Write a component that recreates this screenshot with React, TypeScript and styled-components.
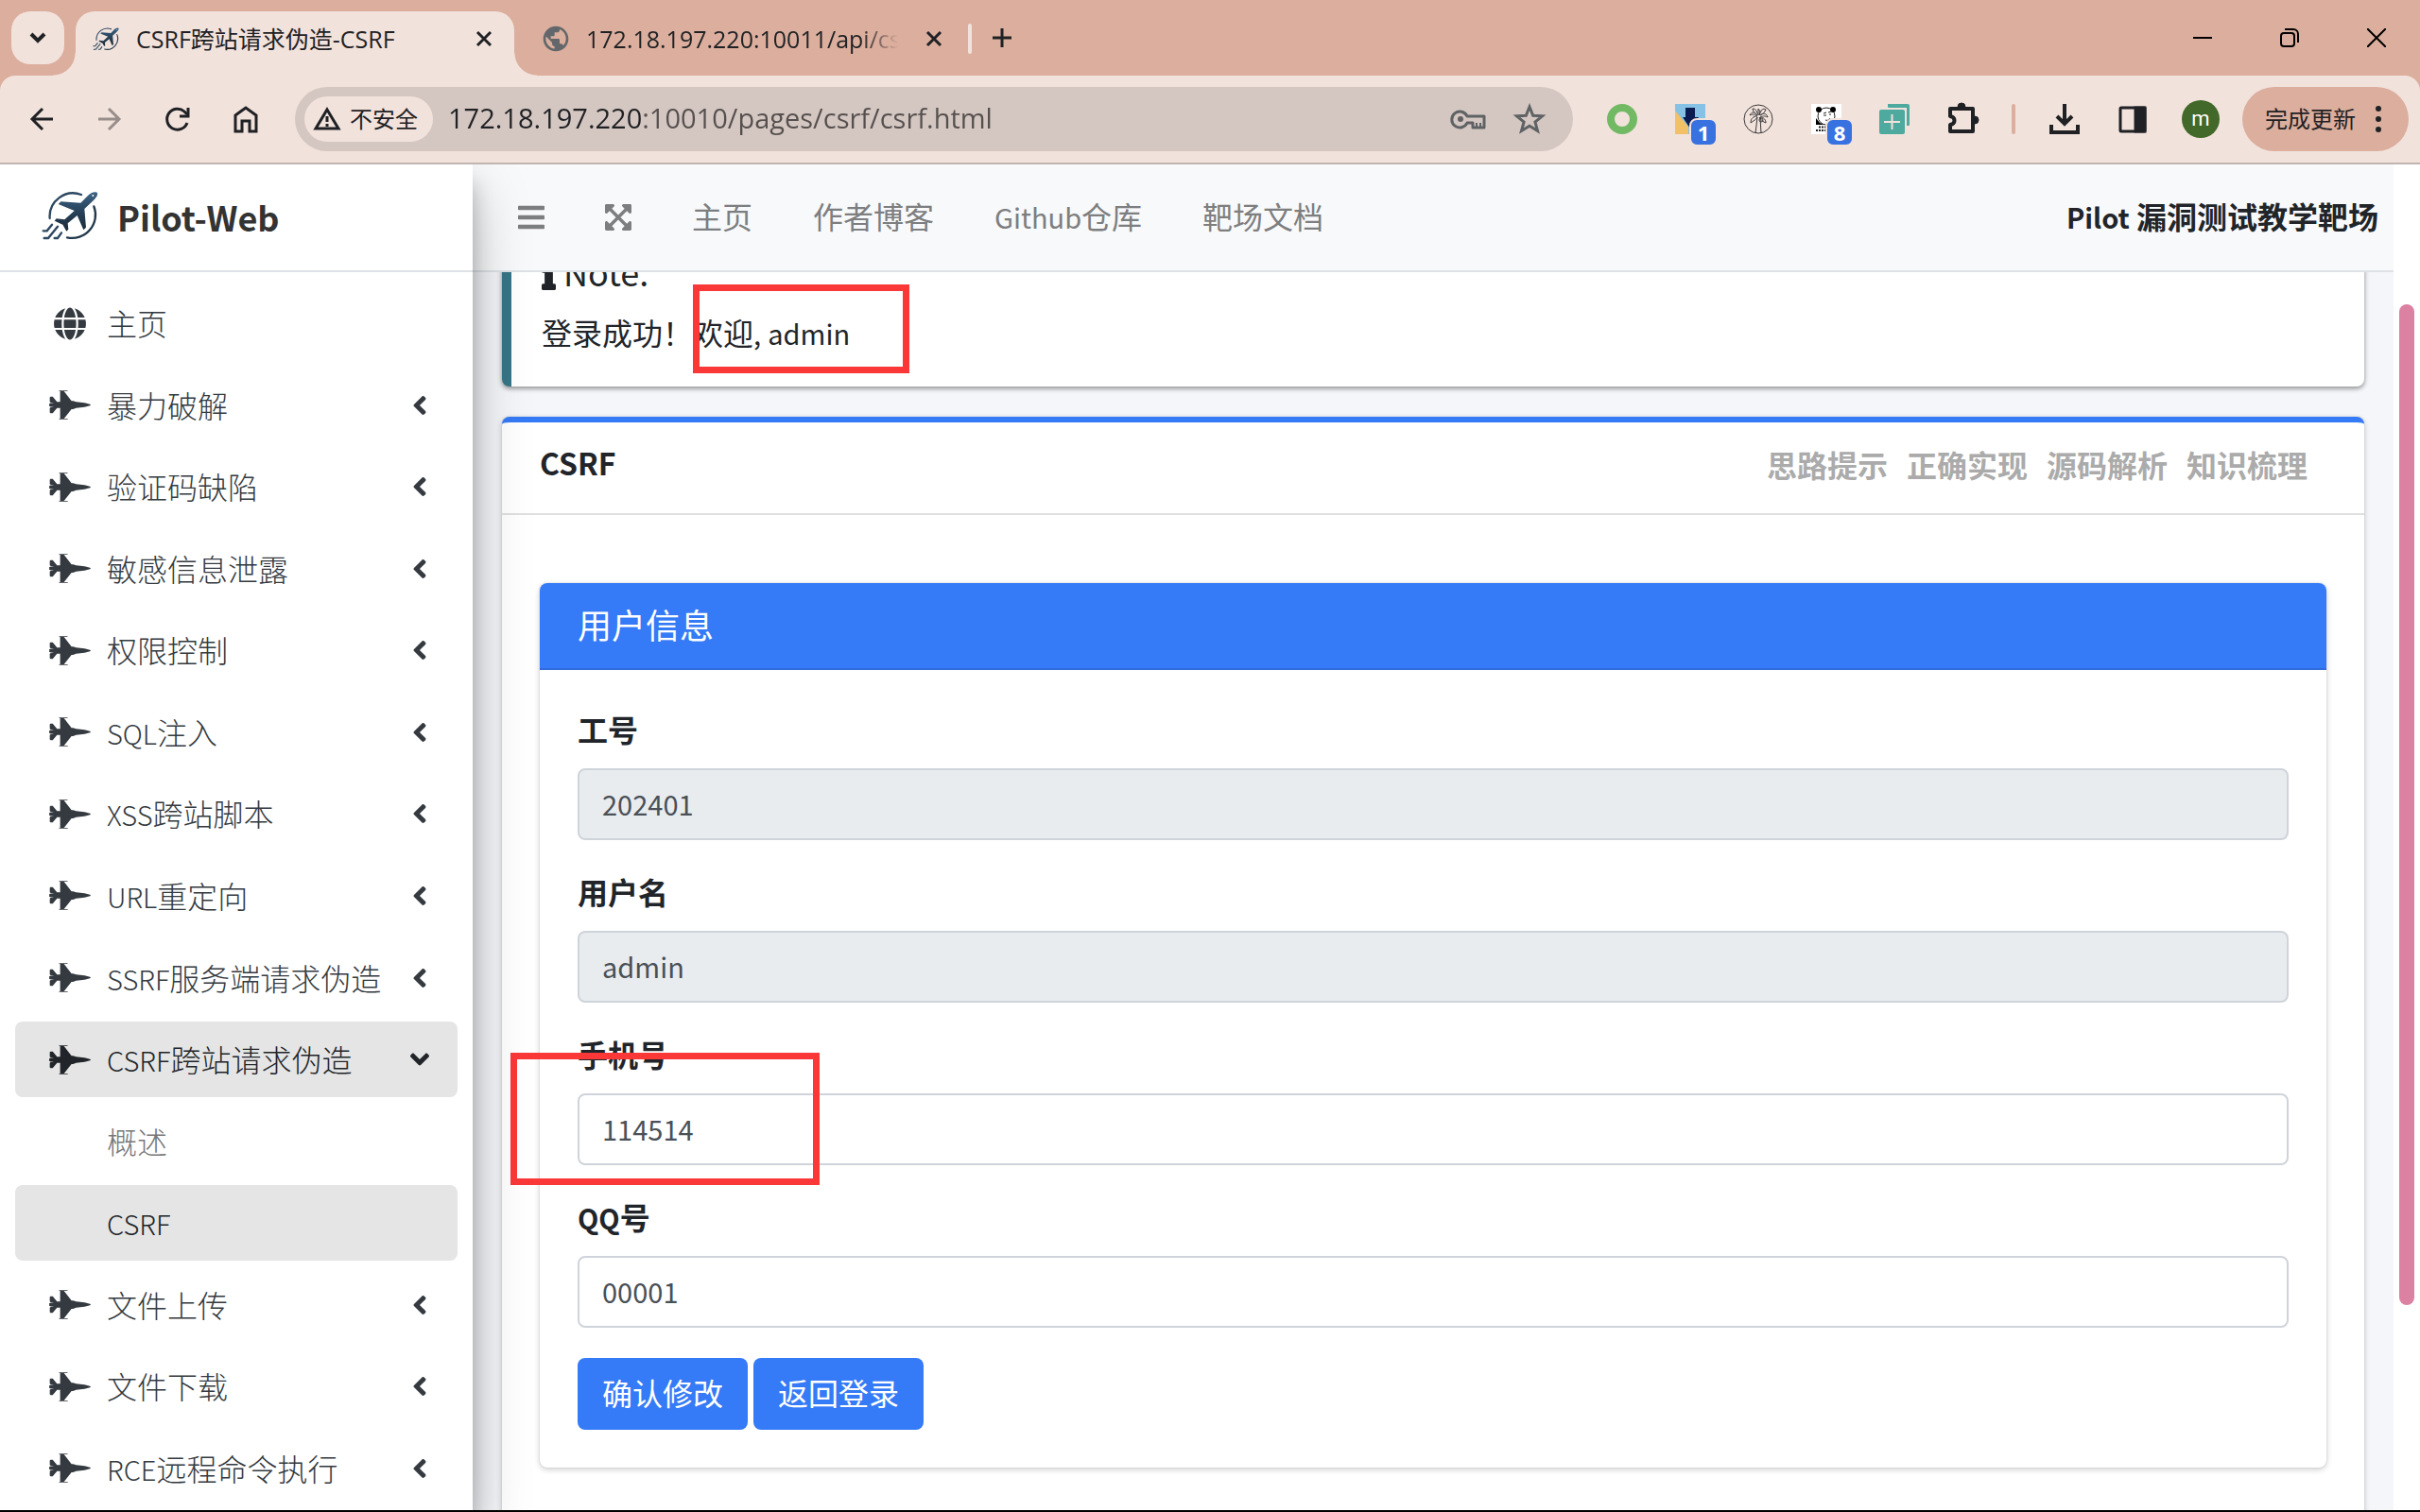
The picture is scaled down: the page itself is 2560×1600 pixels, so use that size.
import React from "react";
import styled, { createGlobalStyle, css } from "styled-components";
import {
  FaAngleDown,
  FaAngleLeft,
  FaBars,
  FaExpandArrowsAlt,
  FaFighterJet,
  FaGlobe,
  FaInfo,
} from "react-icons/fa";
import { MdPublic } from "react-icons/md";

const color = {
  frame: "#dbae9d",
  toolbar: "#f2e2dc",
  omnibox: "#d4c6c1",
  ink: "#1f2124",
  text: "#212529",
  sidebarText: "#343a40",
  muted: "#7d7e7f",
  primary: "#357af6",
  line: "#dee2e6",
  annotation: "#fb3838",
};

const GlobalStyle = createGlobalStyle`
  *, *::before, *::after { box-sizing: border-box; }
  body {
    margin: 0;
    font-family: "Noto Sans CJK SC", sans-serif;
    font-size: 32px;
    line-height: 48px;
    color: ${color.text};
  }
  button, input { font: inherit; color: inherit; margin: 0; }
  button { border: 0; padding: 0; background: none; cursor: pointer; }
  a { color: inherit; text-decoration: none; }
  svg { display: block; flex: none; }
`;

const Window = styled.div`
  display: flex;
  flex-direction: column;
  height: 100vh;
  overflow: hidden;
  background: #fff;
  border-bottom: 2px solid #000;
`;

/* ---------- browser frame ---------- */

const chromeFont = css`
  font-family: "Open Sans", "Noto Sans CJK SC", sans-serif;
  color: ${color.ink};
`;

const TabStrip = styled.div`
  ${chromeFont}
  display: flex;
  flex: none;
  height: 80px;
  padding: 12px 0 0 12px;
  background: ${color.frame};
  font-size: 24px;
  line-height: 32px;
`;

const TabSearch = styled.button`
  display: grid;
  place-items: center;
  width: 56px;
  height: 56px;
  margin-right: 12px;
  border-radius: 20px;
  background: ${color.toolbar};
`;

const Tab = styled.div<{ $active?: boolean }>`
  position: relative;
  display: flex;
  align-items: center;
  height: 68px;
  padding-bottom: 12px;
  padding-top: 2px;
  ${(p) =>
    p.$active
      ? css`
          width: 464px;
          padding-left: 18px;
          padding-right: 20px;
          gap: 18px;
          border-radius: 20px 20px 0 0;
          background: ${color.toolbar};
          &::before,
          &::after {
            content: "";
            position: absolute;
            bottom: 0;
            width: 24px;
            height: 24px;
          }
          &::before {
            right: 100%;
            background: radial-gradient(circle at 0 0, transparent 23px, ${color.toolbar} 24px);
          }
          &::after {
            left: 100%;
            background: radial-gradient(circle at 100% 0, transparent 23px, ${color.toolbar} 24px);
          }
        `
      : css`
          width: 480px;
          padding-left: 28px;
          padding-right: 24px;
          gap: 16px;
          &::after {
            content: "";
            position: absolute;
            right: -4px;
            top: 13px;
            width: 4px;
            height: 32px;
            border-radius: 2px;
            background: ${color.toolbar};
          }
        `}
`;

const TabTitle = styled.span<{ $fade?: boolean }>`
  flex: 1;
  overflow: hidden;
  white-space: nowrap;
  font-size: 25px;
  ${(p) =>
    p.$fade &&
    css`
      margin-right: 10px;
      -webkit-mask-image: linear-gradient(to right, #000 calc(100% - 40px), transparent);
      mask-image: linear-gradient(to right, #000 calc(100% - 40px), transparent);
    `}
`;

const GlyphButton = styled.button`
  display: grid;
  place-items: center;
  width: 24px;
  height: 32px;
`;

const NewTab = styled.button`
  display: grid;
  place-items: center;
  width: 72px;
  height: 56px;
`;

const WindowControls = styled.div`
  display: flex;
  margin-left: auto;
  margin-top: -12px;
`;

const WindowButton = styled.button`
  display: grid;
  place-items: center;
  width: 92px;
  height: 80px;
`;

const ToolbarBack = styled.div`
  flex: none;
  background: ${color.frame};
`;

const Toolbar = styled.div`
  ${chromeFont}
  display: flex;
  align-items: center;
  height: 94px;
  padding: 0 12px 0 8px;
  border-radius: 16px 16px 0 0;
  border-bottom: 2px solid #c0b5b1;
  background: ${color.toolbar};
`;

const ToolButton = styled.button`
  position: relative;
  display: grid;
  place-items: center;
  width: 72px;
  height: 68px;
`;

const Omnibox = styled.div`
  display: flex;
  align-items: center;
  flex: 1;
  height: 68px;
  margin: 0 16px;
  padding: 0 24px 0 10px;
  border-radius: 34px;
  background: ${color.omnibox};
`;

const SecurityChip = styled.button`
  display: flex;
  align-items: center;
  gap: 8px;
  height: 48px;
  padding: 0 16px 0 8px;
  border-radius: 24px;
  background: ${color.toolbar};
  font-size: 24px;
  line-height: 32px;
`;

const Address = styled.input`
  flex: 1;
  min-width: 0;
  height: 48px;
  margin-left: 16px;
  padding: 0 0 2px;
  border: 0;
  outline: 0;
  font-size: 29px;
  line-height: 48px;
  background: linear-gradient(to right, ${color.ink} 207px, #55504e 207px);
  -webkit-background-clip: text;
  background-clip: text;
  -webkit-text-fill-color: transparent;
`;

const OmniActions = styled.div`
  display: flex;
  align-items: center;
  gap: 20px;
`;

const OmniButton = styled.button`
  display: grid;
  place-items: center;
  width: 44px;
  height: 48px;
`;

const Badge = styled.span`
  position: absolute;
  left: 35px;
  top: 33px;
  width: 30px;
  height: 30px;
  border: 2px solid ${color.toolbar};
  border-radius: 8px;
  background: #3871e0;
  color: #fff;
  font: 700 22px/26px "Open Sans", sans-serif;
  text-align: center;
`;

const ToolDivider = styled.span`
  width: 4px;
  height: 32px;
  margin: 0 16px;
  border-radius: 2px;
  background: ${color.frame};
`;

const Avatar = styled.span`
  display: grid;
  place-items: center;
  width: 40px;
  height: 40px;
  border-radius: 50%;
  background: #42682a;
  color: #fff;
  font: 400 22px/32px Roboto, sans-serif;
`;

const UpdatePill = styled.button`
  display: flex;
  align-items: center;
  justify-content: space-between;
  width: 176px;
  height: 68px;
  margin-left: 8px;
  padding: 0 28px 0 24px;
  border-radius: 34px;
  background: ${color.frame};
  font-size: 24px;
  line-height: 32px;
`;

/* ---------- page ---------- */

const Page = styled.div`
  display: flex;
  flex: 1;
  min-height: 0;
  overflow: hidden;
`;

const Sidebar = styled.aside`
  position: relative;
  z-index: 2;
  display: flex;
  flex-direction: column;
  flex: none;
  width: 500px;
  background: #fff;
  box-shadow: 0 28px 56px rgba(0, 0, 0, 0.25), 0 20px 20px rgba(0, 0, 0, 0.22);
`;

const Brand = styled.a`
  display: flex;
  align-items: center;
  flex: none;
  gap: 20px;
  height: 114px;
  padding: 0 44px 2px;
  border-bottom: 2px solid ${color.line};
  color: #333;
  font-size: 36px;
  font-weight: 700;
`;

const Menu = styled.ul`
  display: flex;
  flex-direction: column;
  flex: 1;
  justify-content: space-between;
  margin: 0;
  padding: 14px 16px 4px;
  list-style: none;
`;

const MenuLink = styled.a<{ $active?: boolean; $sub?: boolean }>`
  display: flex;
  align-items: center;
  height: 80px;
  padding: 0 24px 0 34px;
  border-radius: 8px;
  background: ${(p) => (p.$active ? "#e5e5e5" : "transparent")};
  color: ${(p) => (p.$active ? color.text : p.$sub ? "#777" : color.sidebarText)};
  font-weight: 300;
`;

const MenuIcon = styled.span`
  display: grid;
  place-items: center;
  width: 48px;
  margin-right: 15px;
  svg {
    width: 44px;
    height: 35px;
  }
`;

const MenuText = styled.span`
  flex: 1;
  padding-bottom: 2px;
  white-space: nowrap;
`;

const LatinRun = styled.span`
  font-size: 29px;
  line-height: 1;
`;

const Main = styled.div`
  display: flex;
  flex-direction: column;
  flex: 1;
  min-width: 0;
  background: #f4f6f9;
`;

const Navbar = styled.nav`
  position: relative;
  z-index: 1;
  display: flex;
  align-items: center;
  flex: none;
  gap: 64px;
  height: 114px;
  padding: 0 16px 0 48px;
  border-bottom: 2px solid ${color.line};
  background: #f8f9fa;
  color: ${color.muted};
  white-space: nowrap;
`;

const NavIcon = styled.button`
  svg {
    width: 28px;
    height: 32px;
  }
`;

const NavLink = styled.a`
  padding-bottom: 4px;
`;

const SiteTitle = styled.strong`
  margin-left: auto;
  padding-bottom: 4px;
  color: ${color.text};
  font-weight: 700;
`;

const Viewport = styled.main`
  flex: 1;
  min-height: 0;
  overflow: hidden;
`;

/* The page is shown scrolled down a little, under the navbar. */
const Content = styled.div`
  display: flex;
  flex-direction: column;
  gap: 32px;
  margin-top: -55px;
  padding: 0 31px;
`;

const cardShadow = "0 0 2px rgba(0, 0, 0, 0.13), 0 2px 6px rgba(0, 0, 0, 0.2)";

const Callout = styled.section`
  position: relative;
  padding: 30px 32px 34px;
  border-left: 10px solid #367687;
  border-radius: 8px;
  background: #fff;
  box-shadow: 0 2px 6px rgba(0, 0, 0, 0.2), 0 2px 4px rgba(0, 0, 0, 0.28);
`;

const CalloutTitle = styled.h5`
  display: flex;
  align-items: center;
  gap: 8px;
  margin: 0 0 16px;
  font-size: 36px;
  font-weight: 400;
  line-height: 48px;
  svg {
    width: 15px;
    height: 40px;
  }
`;

const Plain = styled.p`
  margin: 0;
`;

const Highlight = styled.div<{ $left: number; $top: number; $width: number; $height: number }>`
  position: absolute;
  left: ${(p) => p.$left}px;
  top: ${(p) => p.$top}px;
  width: ${(p) => p.$width}px;
  height: ${(p) => p.$height}px;
  border: 7px solid ${color.annotation};
  pointer-events: none;
`;

const Card = styled.section`
  border-top: 6px solid ${color.primary};
  border-radius: 8px;
  background: #fff;
  box-shadow: ${cardShadow};
`;

const CardHeader = styled.header`
  display: flex;
  align-items: flex-start;
  justify-content: space-between;
  height: 98px;
  padding: 22px 60px 0 40px;
  border-bottom: 2px solid #dfdfdf;
`;

const CardTitle = styled.h3`
  margin: 0;
  font-size: 32px;
  font-weight: 700;
  line-height: 40px;
`;

const HintLinks = styled.div`
  display: flex;
  gap: 20px;
  color: #ababab;
  font-weight: 700;
  line-height: 44px;
`;

const CardBody = styled.div`
  padding: 72px 40px;
`;

const Panel = styled.form`
  border-radius: 8px;
  background: #fff;
  box-shadow: ${cardShadow};
`;

const PanelTitle = styled.h3`
  margin: 0;
  padding: 19px 40px 23px;
  border-bottom: 2px solid #2f6ddd;
  border-radius: 8px 8px 0 0;
  background: ${color.primary};
  color: #fff;
  font-size: 36px;
  font-weight: 400;
  line-height: 48px;
`;

const PanelBody = styled.div`
  padding: 40px;
`;

const Field = styled.div`
  position: relative;
  display: flex;
  flex-direction: column;
  gap: 20px;
  margin-bottom: 32px;
`;

const FieldLabel = styled.label`
  font-weight: 700;
  line-height: 44px;
`;

const TextInput = styled.input`
  width: 100%;
  height: 76px;
  padding: 0 24px 2px;
  border: 2px solid #ced4da;
  border-radius: 8px;
  background: #fff;
  color: #495057;
  font-size: 29px;
  &:disabled {
    background: #e9ecef;
    -webkit-text-fill-color: #495057;
    opacity: 1;
  }
`;

const ButtonRow = styled.div`
  display: flex;
  gap: 6px;
`;

const PrimaryButton = styled.button`
  height: 76px;
  padding: 0 26px 4px;
  border-radius: 8px;
  background: ${color.primary};
  color: #fff;
`;

const ScrollTrack = styled.div`
  display: grid;
  flex: none;
  grid-template-rows: 148fr 1059fr 217fr;
  width: 28px;
  padding: 0 6px;
  background: #fff;
`;

const ScrollThumb = styled.div`
  grid-row: 2;
  border-radius: 8px;
  background: #db81a1;
`;

/* ---------- drawings ---------- */

const PilotLogo = ({ width }: { width: number }) => (
  <svg width={width} height={(width * 160) / 180} viewBox="25 35 180 160" aria-hidden="true">
    <defs>
      <linearGradient id="pilot" x1="0" y1="0" x2="0" y2="1">
        <stop offset="0" stopColor="#3d6485" />
        <stop offset="0.55" stopColor="#263f56" />
        <stop offset="1" stopColor="#1c2b38" />
      </linearGradient>
    </defs>
    <g fill="none" stroke="#2c4760" strokeWidth="7" strokeLinecap="round">
      <path d="M51 122A74 74 0 0 1 151 47" />
      <path d="M191 84A74 74 0 0 1 106 183" stroke="#22384c" />
      <path d="M58 142L42 162H30" />
      <path d="M76 148L46 185H33" />
      <path d="M88 168L76 185H66" />
    </g>
    <path
      fill="url(#pilot)"
      d="M201 40C192 36 181 41 172 50L149 73L86 69L78 77L129 98L98 126L72 123L66 130L92 142L104 163L110 157L108 138L138 113L158 159L166 151L161 92L189 66C200 55 205 46 201 40Z"
    />
    <circle cx="188" cy="50" r="3" fill="#fff" />
  </svg>
);

const Stroke = ({
  size = 32,
  width = 4,
  stroke = color.ink,
  children,
}: {
  size?: number;
  width?: number;
  stroke?: string;
  children: React.ReactNode;
}) => (
  <svg width={size} height={size} viewBox={`0 0 ${size} ${size}`} fill="none" stroke={stroke} strokeWidth={width} aria-hidden="true">
    {children}
  </svg>
);

const CloseGlyph = () => (
  <Stroke size={20} width={3}>
    <path d="M3 3L17 17M17 3L3 17" />
  </Stroke>
);

const PalmIcon = () => (
  <Stroke width={1} stroke="#3a3a3a">
    <circle cx="16" cy="16" r="15" strokeWidth="1" />
    <path d="M15 14L13 31M18 14L19 31M15 12C12 8 9 8 7 12C11 10 13 12 15 13C11 13 8 15 8 20C11 18 14 16 15 14M16 12C14 8 14 5 10 5C10 8 13 10 15 12M17 12C19 6 21 4 24 6C23 9 20 11 18 12C21 9 25 10 26 14C22 12 20 13 18 14C22 14 24 17 24 20C21 19 19 17 17 14M16 11L16 5L18 8L17 12" />
    <circle cx="19" cy="17" r="2" />
  </Stroke>
);

const PandaIcon = () => (
  <svg width="32" height="32" viewBox="0 0 32 32" aria-hidden="true">
    <rect width="32" height="32" fill="#fff" />
    <path d="M5 15L9 20L14 22H5Z" fill="#000" />
    <ellipse cx="16" cy="13" rx="9" ry="9" fill="#fff" stroke="#222" />
    <circle cx="8" cy="6" r="3" fill="#000" />
    <circle cx="23" cy="6" r="3" fill="#000" />
    <path d="M13 10L16 9M18 9L21 8M13 12H16M19 11H21M15 17C17 18 19 17 20 15" stroke="#222" fill="none" />
    <path d="M8 24.500H15M5 28H15" stroke="#222" strokeWidth="2" strokeDasharray="2 1" />
  </svg>
);

const BlocksIcon = () => (
  <svg width="32" height="32" viewBox="0 0 32 32" aria-hidden="true">
    <rect width="32" height="32" fill="#86c1e6" />
    <path d="M0 7L14 24V32H0Z" fill="#f1c067" />
    <path d="M11 4H21V14H25L16 26L8 14H11Z" fill="#0a1c52" />
  </svg>
);

/* ---------- content ---------- */

/** Sets the Latin runs of a mixed string a step smaller than the Chinese. */
const mixed = (text: string) =>
  text
    .split(/([!-~]+)/)
    .filter(Boolean)
    .map((part, i) => (/^[!-~]+$/.test(part) ? <LatinRun key={i}>{part}</LatinRun> : part));

type MenuEntry = { text: string; icon?: "globe" | "jet"; open?: boolean; active?: boolean };

const menu: MenuEntry[] = [
  { text: "主页", icon: "globe" },
  { text: "暴力破解", icon: "jet" },
  { text: "验证码缺陷", icon: "jet" },
  { text: "敏感信息泄露", icon: "jet" },
  { text: "权限控制", icon: "jet" },
  { text: "SQL注入", icon: "jet" },
  { text: "XSS跨站脚本", icon: "jet" },
  { text: "URL重定向", icon: "jet" },
  { text: "SSRF服务端请求伪造", icon: "jet" },
  { text: "CSRF跨站请求伪造", icon: "jet", open: true, active: true },
  { text: "概述" },
  { text: "CSRF", active: true },
  { text: "文件上传", icon: "jet" },
  { text: "文件下载", icon: "jet" },
  { text: "RCE远程命令执行", icon: "jet" },
];

const fields = [
  { id: "job", label: "工号", value: "202401", disabled: true },
  { id: "user", label: "用户名", value: "admin", disabled: true },
  { id: "phone", label: "手机号", value: "114514", marked: true },
  { id: "qq", label: "QQ号", value: "00001" },
];

const BrowserTabs = () => (
  <TabStrip>
    <TabSearch aria-label="搜索标签页">
      <Stroke size={20} width={4}>
        <path d="M3 6L10 13L17 6" />
      </Stroke>
    </TabSearch>
    <Tab $active>
      <PilotLogo width={28} />
      <TabTitle>CSRF跨站请求伪造-CSRF</TabTitle>
      <GlyphButton aria-label="关闭">
        <CloseGlyph />
      </GlyphButton>
    </Tab>
    <Tab>
      <MdPublic size={32} color="#63676b" />
      <TabTitle $fade>172.18.197.220:10011/api/csrf</TabTitle>
      <GlyphButton aria-label="关闭">
        <CloseGlyph />
      </GlyphButton>
    </Tab>
    <NewTab aria-label="新标签页">
      <Stroke size={20} width={3}>
        <path d="M10 0V20M0 10H20" />
      </Stroke>
    </NewTab>
    <WindowControls>
      <WindowButton aria-label="最小化">
        <Stroke size={20} width={2} stroke="#000">
          <path d="M0 10H20" />
        </Stroke>
      </WindowButton>
      <WindowButton aria-label="还原">
        <Stroke size={20} width={2} stroke="#000">
          <rect x="1" y="5" width="14" height="14" rx="3" />
          <path d="M5 1H14A5 5 0 0 1 19 6V15" />
        </Stroke>
      </WindowButton>
      <WindowButton aria-label="关闭窗口">
        <Stroke size={20} width={2} stroke="#000">
          <path d="M0 0L20 20M20 0L0 20" />
        </Stroke>
      </WindowButton>
    </WindowControls>
  </TabStrip>
);

const BrowserToolbar = () => (
  <ToolbarBack>
    <Toolbar>
      <ToolButton aria-label="后退">
        <Stroke>
          <path d="M28 16H7M17 5L6 16L17 27" strokeWidth="3" />
        </Stroke>
      </ToolButton>
      <ToolButton aria-label="前进">
        <Stroke stroke="#978e8b">
          <path d="M4 16H25M15 5L26 16L15 27" strokeWidth="3" />
        </Stroke>
      </ToolButton>
      <ToolButton aria-label="重新加载">
        <Stroke>
          <path d="M26 20A11 11 0 1 1 23 8L26 11" strokeWidth="3" />
          <path d="M27 4V13H18" strokeWidth="3" />
        </Stroke>
      </ToolButton>
      <ToolButton aria-label="主页">
        <Stroke>
          <path d="M5 29V12L16 4L27 12V29H20V18H12V29Z" strokeWidth="3" />
        </Stroke>
      </ToolButton>
      <Omnibox>
        <SecurityChip>
          <Stroke width={3}>
            <path d="M16 6L28 26H4Z" />
            <path d="M16 13V19M16 21V24" />
          </Stroke>
          不安全
        </SecurityChip>
        <Address aria-label="地址" defaultValue="172.18.197.220:10010/pages/csrf/csrf.html" />
        <OmniActions>
          <OmniButton aria-label="密码">
            <svg width="40" height="32" viewBox="0 0 40 32" fill="none" stroke="#5f6265" strokeWidth="3" aria-hidden="true">
              <path d="M18 13A8.500 8.500 0 1 0 18 20H24V25H36V13H18Z" strokeLinejoin="round" />
              <path d="M28 24V20M32 24V20" strokeWidth="2" />
              <circle cx="11" cy="16" r="3" fill="#5f6265" stroke="none" />
            </svg>
          </OmniButton>
          <OmniButton aria-label="收藏">
            <Stroke size={36} width={3} stroke="#5f6265">
              <path d="M18 5L21.700 14.300L31.500 14.800L23.900 21L26.500 30.500L18 25.200L9.500 30.500L12.100 21L4.500 14.800L14.300 14.300Z" />
            </Stroke>
          </OmniButton>
        </OmniActions>
      </Omnibox>
      <ToolButton aria-label="扩展一">
        <Stroke width={8} stroke="#72b964">
          <circle cx="16" cy="16" r="12" />
        </Stroke>
      </ToolButton>
      <ToolButton>
        <BlocksIcon />
        <Badge>1</Badge>
      </ToolButton>
      <ToolButton aria-label="扩展三">
        <PalmIcon />
      </ToolButton>
      <ToolButton>
        <PandaIcon />
        <Badge>8</Badge>
      </ToolButton>
      <ToolButton aria-label="扩展五">
        <svg width="32" height="32" viewBox="0 0 32 32" aria-hidden="true">
          <path d="M9 0H30Q32 0 32 2V22Q32 23 31 23H29V4H10Q9 4 9 3Z" fill="#4ea99f" />
          <rect y="6" width="27" height="26" rx="2" fill="#4ea99f" />
          <path d="M13.500 11V27M5 19H22" stroke="#f2e2dc" strokeWidth="2" />
        </svg>
      </ToolButton>
      <ToolButton aria-label="扩展程序">
        <Stroke size={36}>
          <path d="M5 7H29V31H5V24C11 23 11 16 5 15Z" strokeWidth="4" strokeLinejoin="round" />
          <path d="M13 5A4 4 0 0 1 21 5ZM31 15A4 4 0 0 1 31 23Z" fill={color.ink} strokeWidth="1" />
        </Stroke>
      </ToolButton>
      <ToolDivider />
      <ToolButton aria-label="下载">
        <Stroke>
          <path d="M16 0V20M8 13L16 21L24 13M2 22V30H30V22" />
        </Stroke>
      </ToolButton>
      <ToolButton aria-label="侧边栏">
        <Stroke width={3}>
          <rect x="3" y="4" width="26" height="25" rx="1" />
          <path d="M19 4H29V29H19Z" fill={color.ink} />
        </Stroke>
      </ToolButton>
      <ToolButton>
        <Avatar>m</Avatar>
      </ToolButton>
      <UpdatePill>
        完成更新
        <svg width="8" height="32" viewBox="0 0 8 32" fill={color.ink} aria-hidden="true">
          <circle cx="4" cy="5" r="3" />
          <circle cx="4" cy="16" r="3" />
          <circle cx="4" cy="27" r="3" />
        </svg>
      </UpdatePill>
    </Toolbar>
  </ToolbarBack>
);

const SideMenu = () => (
  <Sidebar>
    <Brand href="#">
      <PilotLogo width={60} />
      Pilot-Web
    </Brand>
    <Menu>
      {menu.map((m, i) => (
        <li key={i}>
          <MenuLink href="#" $active={m.active} $sub={!m.icon}>
            <MenuIcon>
              {m.icon === "globe" && <FaGlobe />}
              {m.icon === "jet" && <FaFighterJet />}
            </MenuIcon>
            <MenuText>{mixed(m.text)}</MenuText>
            {m.icon === "jet" && (m.open ? <FaAngleDown size={32} /> : <FaAngleLeft size={32} />)}
          </MenuLink>
        </li>
      ))}
    </Menu>
  </Sidebar>
);

export default function App() {
  return (
    <Window>
      <GlobalStyle />
      <BrowserTabs />
      <BrowserToolbar />
      <Page>
        <SideMenu />
        <Main>
          <Navbar>
            <NavIcon aria-label="菜单">
              <FaBars />
            </NavIcon>
            <NavIcon aria-label="全屏">
              <FaExpandArrowsAlt />
            </NavIcon>
            {["主页", "作者博客", "Github仓库", "靶场文档"].map((t) => (
              <NavLink href="#" key={t}>
                {mixed(t)}
              </NavLink>
            ))}
            <SiteTitle>{mixed("Pilot 漏洞测试教学靶场")}</SiteTitle>
          </Navbar>
          <Viewport>
            <Content>
              <Callout>
                <CalloutTitle>
                  <FaInfo />
                  Note:
                </CalloutTitle>
                <Plain>{mixed("登录成功！欢迎, admin")}</Plain>
                <Highlight $left={192} $top={68} $width={229} $height={94} />
              </Callout>
              <Card>
                <CardHeader>
                  <CardTitle>CSRF</CardTitle>
                  <HintLinks>
                    {["思路提示", "正确实现", "源码解析", "知识梳理"].map((t) => (
                      <a href="#" key={t}>
                        {t}
                      </a>
                    ))}
                  </HintLinks>
                </CardHeader>
                <CardBody>
                  <Panel onSubmit={(e) => e.preventDefault()}>
                    <PanelTitle>用户信息</PanelTitle>
                    <PanelBody>
                      {fields.map((f) => (
                        <Field key={f.id}>
                          <FieldLabel htmlFor={f.id}>{mixed(f.label)}</FieldLabel>
                          <TextInput id={f.id} defaultValue={f.value} disabled={f.disabled} />
                          {f.marked && <Highlight $left={-71} $top={21} $width={327} $height={140} />}
                        </Field>
                      ))}
                      <ButtonRow>
                        <PrimaryButton type="submit">确认修改</PrimaryButton>
                        <PrimaryButton type="button">返回登录</PrimaryButton>
                      </ButtonRow>
                    </PanelBody>
                  </Panel>
                </CardBody>
              </Card>
            </Content>
          </Viewport>
        </Main>
        <ScrollTrack>
          <ScrollThumb />
        </ScrollTrack>
      </Page>
    </Window>
  );
}
